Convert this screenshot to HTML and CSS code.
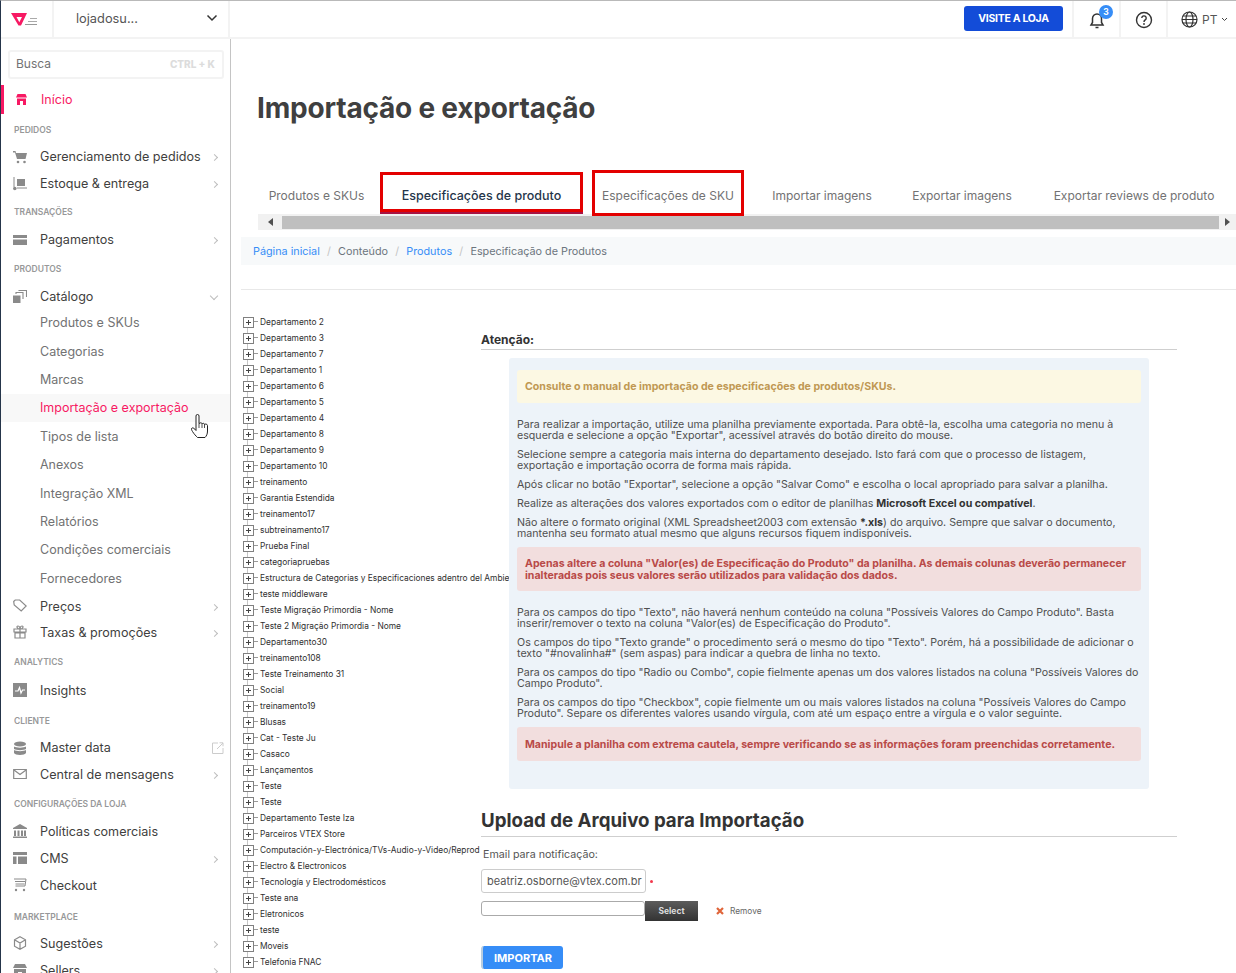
FILE: index.html
```html
<!DOCTYPE html>
<html lang="pt">
<head>
<meta charset="utf-8">
<title>Importação e exportação</title>
<link rel="stylesheet" href="styles.css">
</head>
<body>
<header class="topbar">
  <div class="logo-cell">
    <svg class="logo" viewBox="0 0 27 13" width="27" height="13"><path fill-rule="evenodd" d="M0 0h16l-6 12.500H7.500zM5.500 4h5.500l-2.700 5.200z" fill="#f71963"/><path d="M19 5.500h7M17 8.500h9" stroke="#aaa" stroke-width="1" fill="none"/><path d="M14 11.500h12" stroke="#999" stroke-width="1"/></svg>
  </div>
  <div class="store-cell"><span>lojadosu...</span>
    <svg width="12" height="8" viewBox="0 0 12 8"><path d="M1.500 1.500 6 6l4.500-4.500" fill="none" stroke="#333" stroke-width="1.500"/></svg>
  </div>
  <div class="top-spacer"></div>
  <a class="visit">VISITE A LOJA</a>
  <div class="top-icon bell">
    <svg width="18" height="18" viewBox="0 0 18 18"><path d="M3 14h12l-1.500-2.500V7.500a4.500 4.500 0 0 0-9 0v4zM7.500 16.500h3" fill="none" stroke="#333" stroke-width="1.500"/></svg>
    <span class="badge">3</span>
  </div>
  <div class="top-icon">
    <svg width="18" height="18" viewBox="0 0 18 18"><circle cx="9" cy="9" r="7.500" fill="none" stroke="#333" stroke-width="1.400"/><path d="M6.800 7a2.200 2.200 0 1 1 3.400 1.900c-.8.500-1.200 1-1.200 2" fill="none" stroke="#333" stroke-width="1.400"/><circle cx="9" cy="13" r=".9" fill="#333"/></svg>
  </div>
  <div class="lang">
    <svg width="17" height="17" viewBox="0 0 17 17"><g fill="none" stroke="#333" stroke-width="1.200"><circle cx="8.500" cy="8.500" r="7.500"/><ellipse cx="8.500" cy="8.500" rx="3.500" ry="7.500"/><path d="M1 8.500h15M2 5h13M2 12h13"/></g></svg>
    <span>PT</span>
    <svg width="7" height="5" viewBox="0 0 7 5"><path d="M1 1l2.500 2.500L6 1" fill="none" stroke="#444" stroke-width="1"/></svg>
  </div>
</header>
<div class="shell">
  <aside class="sidebar">
    <div class="search"><span>Busca</span><b>CTRL + K</b></div>
    <a class="nav home"><svg class="ico" viewBox="0 0 11 11"><path d="M1.500 0h8L11 3.500H0zM1 4.500h9V11H7V7H4v4H1z" fill="#f71963"/></svg><span>Início</span></a>
    <div class="sec s1">PEDIDOS</div>
    <a class="nav"><svg class="ico" viewBox="0 0 14 14"><path d="M0 1h2.500l.5 2h11l-1.500 6H4L2 2.500H0z" fill="#8a8a8a"/><circle cx="5" cy="12" r="1.300" fill="#8a8a8a"/><circle cx="11.500" cy="12" r="1.300" fill="#8a8a8a"/></svg><span>Gerenciamento de pedidos</span><i class="chev"></i></a>
    <a class="nav"><svg class="ico" viewBox="0 0 14 14"><path d="M1 0v10" stroke="#8a8a8a" fill="none"/><circle cx="1.800" cy="11.500" r="1.800" fill="#8a8a8a"/><path d="M4 2h8v7H4z" fill="#8a8a8a"/><path d="M4 11h10" stroke="#8a8a8a"/></svg><span>Estoque &amp; entrega</span><i class="chev"></i></a>
    <div class="sec s2">TRANSAÇÕES</div>
    <a class="nav"><svg class="ico" viewBox="0 0 14 14"><path d="M0 2h14v3H0zM0 6.500h14V12H0z" fill="#8a8a8a"/></svg><span>Pagamentos</span><i class="chev"></i></a>
    <div class="sec s3">PRODUTOS</div>
    <a class="nav"><svg class="ico" viewBox="0 0 14 14"><path d="M0 5.500h7.500V13H0z" fill="#8a8a8a"/><path d="M3 4V2.500h7V9M6 1V.500h7.500V7" fill="none" stroke="#8a8a8a" stroke-width="1.100"/></svg><span>Catálogo</span><i class="chev down"></i></a>
    <a class="sub s-a">Produtos e SKUs</a>
    <a class="sub">Categorias</a>
    <a class="sub">Marcas</a>
    <a class="sub active">Importação e exportação</a>
    <a class="sub">Tipos de lista</a>
    <a class="sub">Anexos</a>
    <a class="sub">Integração XML</a>
    <a class="sub">Relatórios</a>
    <a class="sub">Condições comerciais</a>
    <a class="sub">Fornecedores</a>
    <a class="nav n-p"><svg class="ico" viewBox="0 0 14 14"><path d="M.700 2.500l1.500-1.500h4.500l6.500 6-5 5-7-6z" fill="none" stroke="#8a8a8a" stroke-width="1.200"/></svg><span>Preços</span><i class="chev"></i></a>
    <a class="nav"><svg class="ico" viewBox="0 0 14 14"><path d="M1 4h12v3H1zM2 8h10v5H2zM7 4v9M7 4C4 4 3 1 5 1s2 3 2 3 0-3 2-3 1 3-2 3" fill="none" stroke="#8a8a8a" stroke-width="1.200"/></svg><span>Taxas &amp; promoções</span><i class="chev"></i></a>
    <div class="sec s4">ANALYTICS</div>
    <a class="nav"><svg class="ico" viewBox="0 0 14 14"><path d="M0 0h14v14H0z" fill="#8a8a8a"/><path d="M2 8h3l1.500-3.500 1.500 5.500 1.500-3H12" fill="none" stroke="#fff" stroke-width="1.200"/></svg><span>Insights</span></a>
    <div class="sec s5">CLIENTE</div>
    <a class="nav n-m"><svg class="ico" viewBox="0 0 14 14"><ellipse cx="7" cy="3" rx="6" ry="2.500" fill="#8a8a8a"/><path d="M1 5.500c2 1.500 10 1.500 12 0V8c-2 1.500-10 1.500-12 0zM1 9c2 1.500 10 1.500 12 0v3c-1 2.500-11 2.500-12 0z" fill="#8a8a8a"/></svg><span>Master data</span><svg class="ext" viewBox="0 0 12 12"><path d="M11 6v5.500H.500V1H6M5 7l6-6M7.500.800H11v3.500" fill="none" stroke="#ccc"/></svg></a>
    <a class="nav"><svg class="ico" viewBox="0 0 14 14"><path d="M.700 2.500h12.600v9H.700zM1 3l6 4.500L13 3" fill="none" stroke="#8a8a8a" stroke-width="1.200"/></svg><span>Central de mensagens</span><i class="chev"></i></a>
    <div class="sec s6">CONFIGURAÇÕES DA LOJA</div>
    <a class="nav"><svg class="ico" viewBox="0 0 14 14"><path d="M7 0l7 4v1H0V4zM1 6.500h2V12H1zM4.500 6.500h2V12h-2zM8 6.500h2V12H8zM11 6.500h2V12h-2zM0 12.500h14V14H0z" fill="#8a8a8a"/></svg><span>Políticas comerciais</span></a>
    <a class="nav"><svg class="ico" viewBox="0 0 14 14"><path d="M0 1h14v3H0zM0 5.500h3.500V13H0zM5 5.500h9V13H5z" fill="#8a8a8a"/></svg><span>CMS</span><i class="chev"></i></a>
    <a class="nav"><svg class="ico" viewBox="0 0 14 14"><path d="M1 1h12l-1 7H2.500M2 3.500h10M2.500 6h9" fill="none" stroke="#8a8a8a"/><circle cx="3" cy="12" r="1.200" fill="#8a8a8a"/><circle cx="11" cy="12" r="1.200" fill="#8a8a8a"/></svg><span>Checkout</span></a>
    <div class="sec s7">MARKETPLACE</div>
    <a class="nav"><svg class="ico" viewBox="0 0 14 14"><path d="M7 .800l5.500 3v6.400L7 13.200l-5.500-3V3.800zM1.500 3.800L7 7l5.500-3.200M7 7v6.200" fill="none" stroke="#8a8a8a" stroke-width="1.200"/></svg><span>Sugestões</span><i class="chev"></i></a>
    <a class="nav"><svg class="ico" viewBox="0 0 14 14"><path d="M2 1h10l2 4H0zM1 6h12v7H9V9H5v4H1z" fill="#8a8a8a"/></svg><span>Sellers</span><i class="chev"></i></a>
  </aside>
  <main class="main">
    <h1 class="title">Importação e exportação</h1>
    <nav class="tabs">
      <a class="tab t1">Produtos e SKUs</a>
      <a class="tab t2 current">Especificações de produto</a>
      <a class="tab t3 boxed">Especificações de SKU</a>
      <a class="tab t4">Importar imagens</a>
      <a class="tab t5">Exportar imagens</a>
      <a class="tab t6">Exportar reviews de produto</a>
    </nav>
    <div class="hscroll"><span class="arrow left"></span><span class="thumb"></span><span class="arrow right"></span></div>
    <div class="crumbs"><a>Página inicial</a><i>/</i><span>Conteúdo</span><i>/</i><a>Produtos</a><i>/</i><span>Especificação de Produtos</span></div>
    <hr class="rule">
    <div class="columns">
      <ul class="tree">
        <li>Departamento 2</li><li>Departamento 3</li><li>Departamento 7</li><li>Departamento 1</li><li>Departamento 6</li><li>Departamento 5</li><li>Departamento 4</li><li>Departamento 8</li><li>Departamento 9</li><li>Departamento 10</li><li>treinamento</li><li>Garantia Estendida</li><li>treinamento17</li><li>subtreinamento17</li><li>Prueba Final</li><li>categoriapruebas</li><li>Estructura de Categorias y Especificaciones adentro del Ambiente</li><li>teste middleware</li><li>Teste Migração Primordia - Nome</li><li>Teste 2 Migração Primordia - Nome</li><li>Departamento30</li><li>treinamento108</li><li>Teste Treinamento 31</li><li>Social</li><li>treinamento19</li><li>Blusas</li><li>Cat - Teste Ju</li><li>Casaco</li><li>Lançamentos</li><li>Teste</li><li>Teste</li><li>Departamento Teste Iza</li><li>Parceiros VTEX Store</li><li>Computación-y-Electrónica/TVs-Audio-y-Video/Reprod</li><li>Electro &amp; Electronicos</li><li>Tecnología y Electrodomésticos</li><li>Teste ana</li><li>Eletronicos</li><li>teste</li><li>Moveis</li><li>Telefonia FNAC</li>
      </ul>
      <section class="content">
        <h3 class="attn">Atenção:</h3>
        <div class="panel">
          <div class="alert warn">Consulte o manual de importação de especificações de produtos/SKUs.</div>
          <p class="first">Para realizar a importação, utilize uma planilha previamente exportada. Para obtê-la, escolha uma categoria no menu à<br>esquerda e selecione a opção "Exportar", acessível através do botão direito do mouse.</p>
          <p>Selecione sempre a categoria mais interna do departamento desejado. Isto fará com que o processo de listagem,<br>exportação e importação ocorra de forma mais rápida.</p>
          <p>Após clicar no botão "Exportar", selecione a opção "Salvar Como" e escolha o local apropriado para salvar a planilha.</p>
          <p>Realize as alterações dos valores exportados com o editor de planilhas <strong>Microsoft Excel ou compatível</strong>.</p>
          <p>Não altere o formato original (XML Spreadsheet2003 com extensão <strong>*.xls</strong>) do arquivo. Sempre que salvar o documento,<br>mantenha seu formato atual mesmo que alguns recursos fiquem indisponíveis.</p>
          <div class="alert danger two">Apenas altere a coluna "Valor(es) de Especificação do Produto" da planilha. As demais colunas deverão permanecer<br>inalteradas pois seus valores serão utilizados para validação dos dados.</div>
          <p class="first">Para os campos do tipo "Texto", não haverá nenhum conteúdo na coluna "Possíveis Valores do Campo Produto". Basta<br>inserir/remover o texto na coluna "Valor(es) de Especificação do Produto".</p>
          <p>Os campos do tipo "Texto grande" o procedimento será o mesmo do tipo "Texto". Porém, há a possibilidade de adicionar o<br>texto "#novalinha#" (sem aspas) para indicar a quebra de linha no texto.</p>
          <p>Para os campos do tipo "Radio ou Combo", copie fielmente apenas um dos valores listados na coluna "Possíveis Valores do<br>Campo Produto".</p>
          <p>Para os campos do tipo "Checkbox", copie fielmente um ou mais valores listados na coluna "Possíveis Valores do Campo<br>Produto". Separe os diferentes valores usando vírgula, com até um espaço entre a vírgula e o valor seguinte.</p>
          <div class="alert danger one">Manipule a planilha com extrema cautela, sempre verificando se as informações foram preenchidas corretamente.</div>
        </div>
        <h2 class="upload">Upload de Arquivo para Importação</h2>
        <label class="mail-label">Email para notificação:</label>
        <div class="mail-row"><span class="mail">beatriz.osborne@vtex.com.br</span><span class="req"></span></div>
        <div class="file-row">
          <span class="file"></span><span class="select">Select</span>
          <svg class="x" width="8" height="8" viewBox="0 0 8 8"><path d="M1 1l6 6M7 1L1 7" stroke="#e0653a" stroke-width="2.200"/></svg>
          <span class="remove">Remove</span>
        </div>
        <a class="import">IMPORTAR</a>
      </section>
    </div>
  </main>
</div>
<svg class="hand" width="18" height="24" viewBox="0 0 18 24"><path d="M5 11V2a1.500 1.500 0 0 1 3 0v7.500l1-.500c1-.500 2 0 2 1 .500-1 2.500-1 2.500.500.500-.8 3-.5 3 1V17c0 3-1 5-2.500 6.500H6.500C5 22 3 20 1.500 17.500.500 16 0 14.500 1 14c1-.500 2.500.500 4 2.500z" fill="#fff" stroke="#222" stroke-width="1"/><path d="M8 9.500V14M11 10v4M13.500 10.500V14" stroke="#222" fill="none" stroke-width=".8"/></svg>
</body>
</html>
```
FILE: styles.css
```css
* { box-sizing: border-box; }
html, body { margin: 0; height: 973px; overflow: hidden; }
body { width: 1236px; background: #fff; font-family: Inter, "Liberation Sans", sans-serif; color: #3f3f40; border-top: 1px solid #b9b9b9; border-left: 1px solid #25354a; position: relative; }
a { text-decoration: none; color: inherit; }

/* top bar */
.topbar { height: 38px; display: flex; align-items: stretch; border-bottom: 2px solid #f3f3f3; }
.logo-cell { width: 53px; display: flex; align-items: center; justify-content: center; border-right: 2px solid #f3f3f3; padding-right: 4px; }
.store-cell { width: 176px; display: flex; align-items: center; justify-content: space-between; padding: 0 10px 2px 22px; border-right: 2px solid #f3f3f3; font-size: 12.800px; color: #555; }
.top-spacer { flex: 1; }
.visit { align-self: center; width: 99px; height: 25px; margin-right: 9px; margin-top: -1px; border-radius: 3px; background: #134cd8; color: #fff; font-size: 10.500px; font-weight: 700; display: flex; align-items: center; justify-content: center; letter-spacing: -.3px; }
.top-icon { width: 47px; display: flex; align-items: center; justify-content: center; border-left: 2px solid #f3f3f3; position: relative; padding-top: 2px; }
.badge { position: absolute; top: 4px; left: 25px; width: 14px; height: 14px; border-radius: 50%; background: #368df7; color: #fff; font-size: 8.500px; font-weight: 700; display: flex; align-items: center; justify-content: center; }
.lang { width: 70px; display: flex; align-items: center; gap: 4px; padding: 0 0 0 13px; border-left: 2px solid #f3f3f3; font-size: 12px; color: #555; }

/* shell */
.shell { display: flex; height: 934px; }
.sidebar { width: 230px; flex: none; border-right: 1px solid #c4c4c4; padding-top: 11px; overflow: hidden; }
.search { margin: 0 6px 0 7px; height: 29px; border: 2px solid #f3f3f3; border-radius: 3px; padding: 0 7px 2px 6px; display: flex; align-items: center; justify-content: space-between; font-size: 12px; color: #727273; }
.search b { font-size: 10px; color: #dcdcdc; font-weight: 800; }
.nav { height: 27px; display: flex; align-items: center; padding: 0 11px 0 12px; font-size: 12.600px; color: #3f3f40; }
.nav span { flex: 1; margin-left: 13px; }
.ico { width: 14px; height: 14px; flex: none; }
.home { height: 29px; margin-top: 6px; color: #f71963; border-left: 3px solid #f71963; padding-left: 12px; font-size: 12.500px; }
.home .ico { width: 11px; height: 11px; }
.home span { margin-left: 14px; }
.chev { width: 5px; height: 5px; border-top: 1px solid #bdbdbd; border-right: 1px solid #bdbdbd; transform: rotate(45deg); margin-right: 2px; margin-top: 2px; }
.chev.down { transform: rotate(135deg); margin-top: -2px; width: 6px; height: 6px; }
.ext { width: 12px; height: 12px; margin-right: -5px; }
.sec { font-size: 8.500px; font-weight: 600; color: #979899; padding-left: 13px; height: 12px; line-height: 12px; }
.s1 { margin-top: 10px; margin-bottom: 7px; }
.s2 { margin-top: 9px; margin-bottom: 8px; }
.s3 { margin-top: 10px; margin-bottom: 8px; }
.s4 { margin-top: 10px; margin-bottom: 9px; }
.s5 { margin-top: 11px; margin-bottom: 8px; }
.s6 { margin-top: 10px; margin-bottom: 8px; }
.s7 { margin-top: 12px; margin-bottom: 7px; }
.sub { height: 28.400px; display: flex; align-items: center; padding-left: 39px; font-size: 12.500px; color: #727273; }
.sub.s-a { height: 25px; margin-bottom: 2px; }
.sub.active { background: #f8f8f8; color: #f71963; }
.nav.n-p { height: 25px; margin-top: 1px; }
.nav.n-m { height: 26px; }

/* main */
.main { flex: 1; min-width: 0; padding: 51px 0 0 10px; overflow: hidden; }
.title { margin: 0 0 0 16px; font-size: 28px; line-height: 36px; font-weight: 700; color: #3f3f40; white-space: nowrap; letter-spacing: -.2px; }
.tabs { display: flex; margin-top: 45px; height: 42px; font-size: 12px; color: #727273; white-space: nowrap; position: relative; }
.tab { height: 42px; flex: none; display: flex; align-items: center; justify-content: center; padding-top: 6px; }
.t1 { width: 139px; padding-left: 12px; }
.t2 { width: 203px; color: #25354a; font-weight: 500; font-size: 12.500px; border: 3px solid #e30000; height: 40px; padding-top: 6px; box-shadow: 0 2px 0 #a81242; margin-top: 1px; margin-right: 9px; }
.t3 { width: 152px; border: 3px solid #e30000; height: 46px; margin-top: -1px; padding-top: 4px; }
.t4 { width: 156px; }
.t5 { width: 124px; }
.t6 { width: 220px; }
.hscroll { height: 16px; margin: 1px 0 0 17px; background: #f1f1f1; display: flex; align-items: center; }
.thumb { flex: 1; height: 13px; background: #bfbfbf; }
.arrow { width: 24px; flex: none; display: flex; justify-content: center; }
.arrow.right { width: 17px; }
.arrow.left::before { content: ""; border: 4px solid transparent; border-right: 5px solid #505050; border-left: 0; }
.arrow.right::before { content: ""; border: 4px solid transparent; border-left: 5px solid #505050; border-right: 0; }
.crumbs { height: 28px; margin-top: 7px; background: #f7f9fa; display: flex; align-items: center; padding-left: 12px; font-size: 10.800px; color: #6c757d; white-space: nowrap; }
.crumbs a { color: #368df7; }
.crumbs i { font-style: normal; color: #c4c4c4; margin: 0 7.200px; }
.rule { border: 0; border-top: 1px solid #e8e8e8; margin: 24px 0 0; height: 0; }

.columns { display: flex; margin-top: 24px; }
.tree { list-style: none; margin: 0; padding: 0 0 0 2px; width: 240px; flex: none; font-size: 8.400px; color: #2f2f2f; white-space: nowrap; }
.tree li { height: 16px; line-height: 16px; padding-left: 17px; position: relative; background: linear-gradient(#9a9a9a, #9a9a9a) 10px 7px / 5px 1px no-repeat; }
.tree li::before { content: ""; position: absolute; left: 0; top: 3px; width: 9px; height: 9px; border: 1px solid #808080; background: linear-gradient(#444, #444) center / 5px 1px no-repeat, linear-gradient(#444, #444) center / 1px 5px no-repeat, #fff; z-index: 1; }
.tree li::after { content: ""; position: absolute; left: 4px; top: 7px; height: 16px; width: 1px; background: #c6c6c6; }
.tree li:last-child::after { display: none; }
.content { width: 696px; position: relative; padding-top: 4px; }
.attn { margin: 14px 0 0; font-size: 12px; line-height: 16px; height: 18px; font-weight: 700; border-bottom: 1px solid #cfcfcf; color: #333; }
.panel { position: relative; margin: 8px 0 0 28px; width: 640px; height: 431px; background: #edf3f9; border-radius: 3px; padding: 12px 8px; font-size: 10.650px; line-height: 11px; color: #4f4f4f; white-space: nowrap; }
.panel p { margin: 0 0 8px; }
.panel p.first { margin-top: 16px; }
.panel strong { color: #333; }
.alert { height: 33px; padding: 0 8px; display: flex; align-items: center; font-weight: 700; border-radius: 3px; line-height: 12px; font-size: 10.600px; }
.warn { background: #fcf8e3; color: #c09853; }
.danger { background: #f2dede; color: #b94a48; display: block; }
.two { height: 44px; padding-top: 11px; }
.one { height: 34px; padding-top: 12px; }
.upload { margin: 20px 0 0; font-size: 18.700px; line-height: 24px; height: 28px; font-weight: 700; border-bottom: 1px solid #cfcfcf; color: #333; white-space: nowrap; }
.mail-label { display: block; margin: 11px 0 0 2px; font-size: 10.700px; line-height: 14px; color: #555; }
.mail-row { display: flex; align-items: center; margin-top: 7px; }
.mail { width: 165px; height: 24px; border: 1px solid #ccc; border-radius: 3px; padding-left: 5px; display: flex; align-items: center; font-size: 11px; color: #555; white-space: nowrap; overflow: hidden; }
.req { width: 3px; height: 3px; background: #f2384c; border-radius: 50%; margin-left: 4px; }
.file-row { display: flex; align-items: center; margin-top: 8px; height: 20px; }
.file { width: 164px; height: 15px; margin-top: -5px; border: 1px solid #aaa; border-radius: 3px; }
.select { width: 53px; height: 20px; background: linear-gradient(#5c5c5c, #333); color: #ddd; display: flex; align-items: center; justify-content: center; font-size: 8.500px; font-weight: 700; }
.x { margin-left: 18px; }
.remove { margin-left: 6px; font-size: 8.300px; color: #666; }
.import { margin-top: 25px; width: 82px; height: 23px; background: #368df7; border-left: 2px solid #b9cde0; border-radius: 3px; color: #fff; font-size: 11px; font-weight: 700; display: flex; align-items: center; justify-content: center; }
.hand { position: absolute; left: 190px; top: 413px; }
```
